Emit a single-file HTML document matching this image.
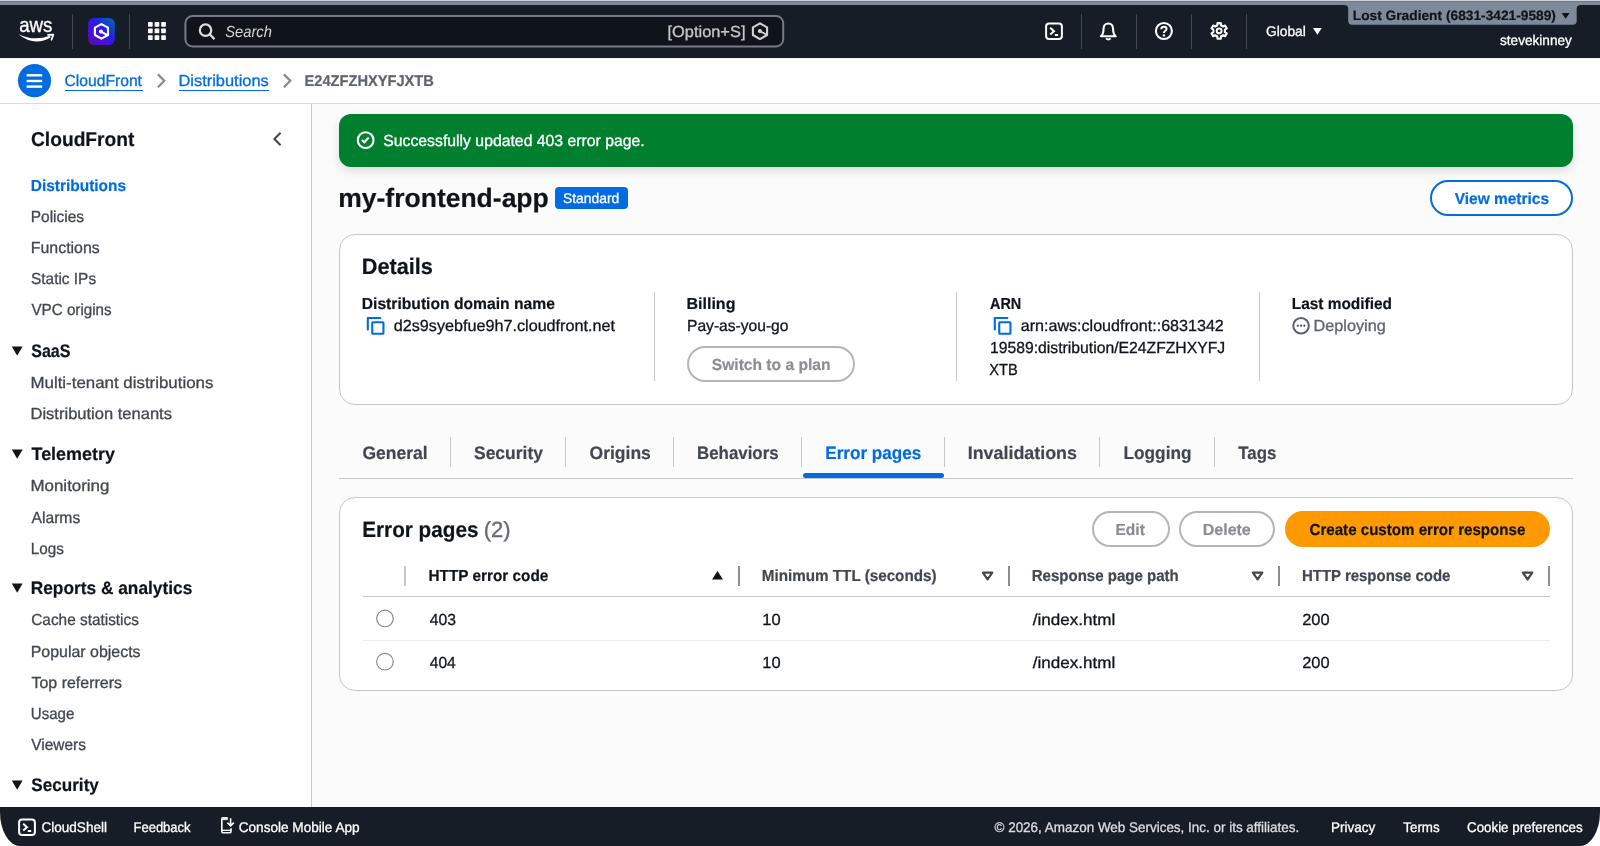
<!DOCTYPE html>
<html lang="en"><head><meta charset="utf-8"><title>CloudFront - E24ZFZHXYFJXTB</title>
<style>
*{box-sizing:border-box;margin:0;padding:0}
html,body{width:1600px;height:846px;overflow:hidden;background:#fff}
body{position:relative;font-family:"Liberation Sans",Arial,sans-serif;font-size:14px;color:#0f141a}
.a{position:absolute}
.t{position:absolute;line-height:20px;white-space:nowrap;transform-origin:0 0;text-rendering:geometricPrecision}
.vsep{position:absolute;width:1px;background:#424650}
.card{position:absolute;left:339px;width:1234px;border:1px solid #c6c6cd;border-radius:16px;background:#fff}
.btn{position:absolute;border-radius:20px;border:2px solid #b4b4bb;background:#fff}
.cdiv{position:absolute;width:1px;background:#c6c6cd}
.hdiv{position:absolute;width:2px;background:#b4b4bb}
.radio{position:absolute;width:17px;height:17px;border-radius:50%;border:1px solid #8c8c94;background:#fff}
svg{position:absolute;overflow:visible}
.tl{position:absolute;left:0;top:0;width:1600px;height:846px;will-change:transform}
</style></head><body>

<!-- main background -->
<div class="a" style="left:312px;top:104px;width:1288px;height:703px;background:#fbfbfc"></div>

<!-- top navigation -->
<div class="a" style="left:0;top:0;width:1600px;height:58px;background:#161d26"></div>
<div class="a" style="left:0;top:0;width:1600px;height:5px;background:linear-gradient(#cfd2db 0,#cfd2db 1px,#707a8a 1px,#707a8a 2px,#7e8999 2px,#7e8999 5px)"></div>
<!-- account tab -->
<svg style="left:1340px;top:4px" width="245" height="24" viewBox="0 0 245 24"><path d="M3.6 0 H241.4 V0.9 C238.6 0.9 236.7 2 236.7 4.2 V16.8 Q236.7 20.8 232.7 20.8 H12.2 Q8.2 20.8 8.2 16.8 V4.2 C8.2 2 6.4 0.9 3.6 0.9 Z" fill="#7e8999"/><path d="M221.7 9.1 h7.9 l-3.95 5.7z" fill="#0f141a"/></svg>

<!-- aws logo -->
<svg style="left:18px;top:19px;will-change:transform" width="37" height="24" viewBox="0 0 37 24"><text x="1.2" y="12.7" font-family="Liberation Sans, Arial, sans-serif" font-size="21" fill="#fff" stroke="#fff" stroke-width="0.35" textLength="33.2" lengthAdjust="spacingAndGlyphs">aws</text><path d="M0.4 15.2 Q16 22.6 31.8 16.8 L32.7 18.6 Q16 27.8 0.4 15.2 Z" fill="#fff"/><path d="M30 15.9 L35.4 15.6 L33.5 20.8" fill="none" stroke="#fff" stroke-width="1.7" stroke-linecap="round" stroke-linejoin="round"/></svg>
<div class="vsep" style="left:72px;top:13.5px;height:35px"></div>
<!-- Q icon -->
<svg style="left:87.8px;top:17.8px" width="27" height="27" viewBox="0 0 27 27"><defs><linearGradient id="qg" x1="0.05" y1="0.95" x2="0.95" y2="0.05"><stop offset="0" stop-color="#5a0aa8"/><stop offset="0.3" stop-color="#4a10d4"/><stop offset="0.58" stop-color="#2a1ce6"/><stop offset="0.8" stop-color="#0c48c8"/><stop offset="1" stop-color="#0868b4"/></linearGradient></defs><rect width="26.8" height="26.9" rx="5.8" fill="url(#qg)"/><path d="M13.45 6.1 L20 9.7 V17 L13.45 20.7 L6.9 17 V9.7 Z" fill="none" stroke="#fff" stroke-width="2.1" stroke-linejoin="round"/><circle cx="12.9" cy="13.4" r="2" fill="#fff"/><path d="M13.4 13.8 L19.4 17.2" stroke="#fff" stroke-width="2"/></svg>
<div class="vsep" style="left:129px;top:13.5px;height:35px"></div>
<!-- grid icon -->
<svg style="left:147.8px;top:22.2px" width="18" height="18" viewBox="0 0 18 18" fill="#fff"><rect x="0" y="0" width="4.7" height="4.7" rx="0.7"/><rect x="6.6" y="0" width="4.7" height="4.7" rx="0.7"/><rect x="13.2" y="0" width="4.7" height="4.7" rx="0.7"/><rect x="0" y="6.6" width="4.7" height="4.7" rx="0.7"/><rect x="6.6" y="6.6" width="4.7" height="4.7" rx="0.7"/><rect x="13.2" y="6.6" width="4.7" height="4.7" rx="0.7"/><rect x="0" y="13.2" width="4.7" height="4.7" rx="0.7"/><rect x="6.6" y="13.2" width="4.7" height="4.7" rx="0.7"/><rect x="13.2" y="13.2" width="4.7" height="4.7" rx="0.7"/></svg>
<!-- search -->
<svg style="left:0;top:0" width="800" height="58" viewBox="0 0 800 58"><rect x="185.4" y="16" width="597.8" height="30.5" rx="7.2" fill="#0f141a" stroke="#767a87" stroke-width="2"/></svg>
<svg style="left:198px;top:22px" width="19" height="19" viewBox="0 0 19 19"><circle cx="7.55" cy="8.15" r="5.7" fill="none" stroke="#dedee3" stroke-width="2.2"/><path d="M11.7 12.3 L16.5 17.1" stroke="#dedee3" stroke-width="2.2" stroke-linecap="butt"/></svg>
<svg style="left:751px;top:22px" width="18" height="19" viewBox="0 0 18 19"><path d="M9 1.4 L16.1 5.3 V13 L9 17.1 L1.9 13 V5.3 Z" fill="none" stroke="#d1d1d8" stroke-width="2.1" stroke-linejoin="round"/><circle cx="8.9" cy="9.1" r="2.1" fill="#d1d1d8"/><path d="M9.4 9.5 L15.3 12.4" stroke="#d1d1d8" stroke-width="1.9"/></svg>

<!-- right nav icons -->
<svg style="left:1045px;top:22px" width="19" height="19" viewBox="0 0 19 19"><rect x="1.1" y="1.4" width="15.8" height="15.6" rx="3" fill="none" stroke="#fff" stroke-width="2"/><path d="M5.2 5.8 L9 9.2 L5.2 12.6" fill="none" stroke="#fff" stroke-width="2" stroke-linejoin="miter"/><path d="M9.8 13 H13.2" stroke="#fff" stroke-width="2"/></svg>
<div class="vsep" style="left:1081px;top:13.5px;height:35px"></div>
<svg style="left:1099px;top:22px" width="19" height="19" viewBox="0 0 19 19"><path d="M1.9 14.3 C4.5 12.4 4.4 10.4 4.5 7 C4.6 3.6 6.6 1.5 9.3 1.5 C12 1.5 14 3.6 14.1 7 C14.2 10.4 14.1 12.4 16.7 14.3 Z" fill="none" stroke="#fff" stroke-width="2.1" stroke-linejoin="round"/><path d="M7 16.4 Q9.3 18.7 11.6 16.4" fill="none" stroke="#fff" stroke-width="1.9"/></svg>
<div class="vsep" style="left:1136px;top:13.5px;height:35px"></div>
<svg style="left:1154px;top:22px" width="19" height="19" viewBox="0 0 19 19"><circle cx="9.9" cy="9" r="8" fill="none" stroke="#fff" stroke-width="2.1"/><path d="M7.2 7.3 C7.2 5.5 8.4 4.7 9.9 4.7 C11.4 4.7 12.6 5.6 12.6 7 C12.6 8.9 9.9 8.8 9.9 11" fill="none" stroke="#fff" stroke-width="1.9"/><circle cx="9.9" cy="13.4" r="1.2" fill="#fff"/></svg>
<div class="vsep" style="left:1191px;top:13.5px;height:35px"></div>
<svg style="left:1210px;top:22px" width="19" height="19" viewBox="0 0 19 19"><path d="M7.35 3.28 L7.48 1.08 L10.82 1.08 L10.95 3.28 L13.12 4.53 L15.09 3.54 L16.76 6.43 L14.92 7.65 L14.92 10.15 L16.76 11.37 L15.09 14.26 L13.12 13.27 L10.95 14.52 L10.82 16.72 L7.48 16.72 L7.35 14.52 L5.18 13.27 L3.21 14.26 L1.54 11.37 L3.38 10.15 L3.38 7.65 L1.54 6.43 L3.21 3.54 L5.18 4.53 Z" fill="none" stroke="#fff" stroke-width="2.1" stroke-linejoin="round"/><circle cx="9.15" cy="8.9" r="2.4" fill="none" stroke="#fff" stroke-width="2"/></svg>
<div class="vsep" style="left:1246px;top:13.5px;height:35px"></div>
<svg style="left:1313px;top:28px" width="9" height="7" viewBox="0 0 9 7"><path d="M0 0 H8.8 L4.4 6.8 Z" fill="#fff"/></svg>

<!-- breadcrumb bar -->
<div class="a" style="left:0;top:103px;width:1600px;height:1px;background:#dadae0"></div>
<div class="a" style="left:0;top:58px;width:1600px;height:1px;background:#f2f2f4"></div>
<svg style="left:0;top:58px" width="60" height="46" viewBox="0 0 60 46"><circle cx="34.5" cy="22.6" r="16.6" fill="#006ce0"/></svg>
<svg style="left:18px;top:64px" width="34" height="34" viewBox="0 0 34 34" fill="#fff"><rect x="8.6" y="10.1" width="15.6" height="2.4"/><rect x="8.6" y="15.8" width="15.6" height="2.4"/><rect x="8.6" y="21.4" width="15.6" height="2.4"/></svg>
<svg style="left:156px;top:73px" width="11" height="15" viewBox="0 0 11 15"><path d="M1.9 1.4 L8.3 7.8 L1.9 14.2" fill="none" stroke="#858894" stroke-width="2.2"/></svg>
<svg style="left:281.5px;top:73px" width="11" height="15" viewBox="0 0 11 15"><path d="M1.9 1.4 L8.3 7.8 L1.9 14.2" fill="none" stroke="#858894" stroke-width="2.2"/></svg>
<div class="a" style="left:65px;top:90px;width:78px;height:1px;background:#006ce0"></div>
<div class="a" style="left:179px;top:90px;width:90px;height:1px;background:#006ce0"></div>

<!-- sidebar -->
<div class="a" style="left:311px;top:104px;width:1px;height:703px;background:#c6c6cd"></div>
<svg style="left:271px;top:131px" width="12" height="16" viewBox="0 0 12 16"><path d="M9.6 1.8 L3.4 8 L9.6 14.2" fill="none" stroke="#424650" stroke-width="2"/></svg>
<svg style="left:10.5px;top:346px" width="12" height="10" viewBox="0 0 12 10"><path d="M0.8 0.6 H11.6 L6.2 9.8 Z" fill="#0f141a"/></svg>
<svg style="left:10.5px;top:448.9px" width="12" height="10" viewBox="0 0 12 10"><path d="M0.8 0.6 H11.6 L6.2 9.8 Z" fill="#0f141a"/></svg>
<svg style="left:10.5px;top:583.3px" width="12" height="10" viewBox="0 0 12 10"><path d="M0.8 0.6 H11.6 L6.2 9.8 Z" fill="#0f141a"/></svg>
<svg style="left:10.5px;top:780px" width="12" height="10" viewBox="0 0 12 10"><path d="M0.8 0.6 H11.6 L6.2 9.8 Z" fill="#0f141a"/></svg>

<!-- flash -->
<div class="a" style="left:339px;top:114px;width:1234px;height:53px;border-radius:12px;background:#00802f;box-shadow:0 4px 10px rgba(0,7,22,.12)"></div>
<svg style="left:357px;top:131px" width="18" height="19" viewBox="0 0 18 19"><circle cx="8.65" cy="9.15" r="7.85" fill="none" stroke="#fff" stroke-width="2.1"/><path d="M4.9 8.9 L7.4 11.3 L11.7 6.5" fill="none" stroke="#fff" stroke-width="2.1"/></svg>

<!-- title row -->
<div class="a" style="left:555px;top:187px;width:73px;height:22px;border-radius:4px;background:#006ce0"></div>
<div class="btn" style="left:1430px;top:180px;width:143px;height:36px;border-color:#006ce0"></div>

<!-- details card -->
<div class="card" style="top:234px;height:171px"></div>
<div class="cdiv" style="left:654px;top:292px;height:89px"></div>
<div class="cdiv" style="left:956px;top:292px;height:89px"></div>
<div class="cdiv" style="left:1259px;top:292px;height:89px"></div>
<svg style="left:365px;top:317px" width="21" height="19" viewBox="0 0 21 19"><path d="M2.8 12.5 V0.95 H15.3" fill="none" stroke="#006ce0" stroke-width="2.1" stroke-linecap="round" stroke-linejoin="round"/><rect x="7.25" y="5.25" width="11.2" height="11.5" rx="0.6" fill="none" stroke="#006ce0" stroke-width="2.1"/></svg>
<svg style="left:992.1px;top:317px" width="21" height="19" viewBox="0 0 21 19"><path d="M2.8 12.5 V0.95 H15.3" fill="none" stroke="#006ce0" stroke-width="2.1" stroke-linecap="round" stroke-linejoin="round"/><rect x="7.25" y="5.25" width="11.2" height="11.5" rx="0.6" fill="none" stroke="#006ce0" stroke-width="2.1"/></svg>
<div class="btn" style="left:687px;top:346px;width:168px;height:36px"></div>
<svg style="left:1292px;top:317px" width="18" height="18" viewBox="0 0 18 18"><circle cx="9.05" cy="8.7" r="7.8" fill="none" stroke="#5c606b" stroke-width="2"/><circle cx="5.8" cy="8.7" r="1.1" fill="#4a4e59"/><circle cx="9.05" cy="8.7" r="1.1" fill="#4a4e59"/><circle cx="12.35" cy="8.7" r="1.1" fill="#4a4e59"/></svg>

<!-- tabs -->
<div class="a" style="left:339px;top:478px;width:1234px;height:1px;background:#c6c6cd"></div>
<div class="a" style="left:803px;top:473px;width:141px;height:5px;border-radius:3px;background:#006ce0"></div>
<div class="cdiv" style="left:450px;top:437px;height:30px"></div>
<div class="cdiv" style="left:565px;top:437px;height:30px"></div>
<div class="cdiv" style="left:673px;top:437px;height:30px"></div>
<div class="cdiv" style="left:801px;top:437px;height:30px"></div>
<div class="cdiv" style="left:944px;top:437px;height:30px"></div>
<div class="cdiv" style="left:1099px;top:437px;height:30px"></div>
<div class="cdiv" style="left:1214px;top:437px;height:30px"></div>

<!-- error pages card -->
<div class="card" style="top:497px;height:194px"></div>
<div class="btn" style="left:1092px;top:511px;width:78px;height:36px"></div>
<div class="btn" style="left:1179px;top:511px;width:96px;height:36px"></div>
<div class="btn" style="left:1284.5px;top:511px;width:265.5px;height:36px;border-color:#ff9900;background:#ff9900"></div>
<div class="hdiv" style="left:404px;top:566px;height:20px;background:#c6c6cd"></div>
<div class="hdiv" style="left:738px;top:566px;height:20px;background:#8c8c94"></div>
<div class="hdiv" style="left:1008px;top:566px;height:20px;background:#8c8c94"></div>
<div class="hdiv" style="left:1278px;top:566px;height:20px;background:#8c8c94"></div>
<div class="hdiv" style="left:1548px;top:566px;height:20px;background:#8c8c94"></div>
<div class="a" style="left:363px;top:596px;width:1187px;height:1px;background:#c6c6cd"></div>
<div class="a" style="left:363px;top:640px;width:1187px;height:1px;background:#ebebf0"></div>
<svg style="left:370px;top:600px" width="30" height="80" viewBox="0 0 30 80"><circle cx="14.95" cy="18.45" r="8.3" fill="#fff" stroke="#858891" stroke-width="1.15"/><circle cx="14.95" cy="61.7" r="8.3" fill="#fff" stroke="#858891" stroke-width="1.15"/></svg>
<svg style="left:711px;top:570px" width="13" height="11" viewBox="0 0 13 11"><path d="M6.5 1 L12 9.6 H1 Z" fill="#0f141a"/></svg>
<svg style="left:981px;top:570px" width="13" height="11" viewBox="0 0 13 11"><path d="M1.9 2.6 H11.3 L6.6 9.4 Z" fill="none" stroke="#424650" stroke-width="2.2" stroke-linejoin="round"/></svg>
<svg style="left:1251px;top:570px" width="13" height="11" viewBox="0 0 13 11"><path d="M1.9 2.6 H11.3 L6.6 9.4 Z" fill="none" stroke="#424650" stroke-width="2.2" stroke-linejoin="round"/></svg>
<svg style="left:1521px;top:570px" width="13" height="11" viewBox="0 0 13 11"><path d="M1.9 2.6 H11.3 L6.6 9.4 Z" fill="none" stroke="#424650" stroke-width="2.2" stroke-linejoin="round"/></svg>

<!-- footer -->
<div class="a" style="left:0;top:807px;width:1600px;height:39px;background:#161d26;border-radius:0 0 20px 20px / 0 0 34px 34px"></div>
<svg style="left:18px;top:818px" width="19" height="19" viewBox="0 0 19 19"><rect x="1.1" y="1.4" width="15.8" height="15.6" rx="3" fill="none" stroke="#fff" stroke-width="2"/><path d="M5.2 5.8 L9 9.2 L5.2 12.6" fill="none" stroke="#fff" stroke-width="2"/><path d="M9.8 13 H13.2" stroke="#fff" stroke-width="2"/></svg>
<svg style="left:219px;top:816px" width="16" height="19" viewBox="0 0 16 19"><path d="M8.6 1.8 H4.2 Q2.8 1.8 2.8 3.2 V15.4 Q2.8 16.8 4.2 16.8 H10.6 Q12 16.8 12 15.4 V12.2" fill="none" stroke="#fff" stroke-width="1.6"/><rect x="2.8" y="1.4" width="6" height="2.7" fill="#e6e6ea"/><path d="M2.8 14.3 H12" stroke="#fff" stroke-width="1.3"/><path d="M11.6 2.2 V9.4 M8.4 6.6 L11.6 9.8 L14.8 6.6" fill="none" stroke="#fff" stroke-width="1.6"/></svg>

<div class="tl">
<span class="t" style="left:225px;top:23px;font-size:16px;color:#d5d5dc;transform:translateX(0.25px) scaleX(0.9209);font-style:italic;">Search</span>
<span class="t" style="left:667px;top:23px;font-size:16px;color:#c6c6cd;-webkit-text-stroke:0.3px;transform:translateX(0.50px) scaleX(1.0248);">[Option+S]</span>
<span class="t" style="left:1266px;top:21px;font-size:14px;color:#fff;-webkit-text-stroke:0.3px;transform:translateX(0.00px) scaleX(0.9838);">Global</span>
<span class="t" style="left:1352px;top:6px;font-size:13.5px;color:#0f141a;font-weight:700;-webkit-text-stroke:0.2px;transform:translateX(0.75px) scaleX(1.0181);">Lost Gradient (6831-3421-9589)</span>
<span class="t" style="left:1500px;top:30px;font-size:14px;color:#fff;-webkit-text-stroke:0.3px;transform:translateX(0.00px) scaleX(0.9725);">stevekinney</span>
<a class="t" style="left:64px;top:72px;font-size:16px;color:#006ce0;-webkit-text-stroke:0.3px;transform:translateX(0.50px) scaleX(0.9786);">CloudFront</a>
<a class="t" style="left:178px;top:72px;font-size:16px;color:#006ce0;-webkit-text-stroke:0.3px;transform:translateX(0.50px) scaleX(1.0251);">Distributions</a>
<span class="t" style="left:304px;top:72px;font-size:15.5px;color:#5f6370;font-weight:700;-webkit-text-stroke:0.2px;transform:translateX(0.50px) scaleX(0.9448);">E24ZFZHXYFJXTB</span>
<h2 class="t" style="left:31px;top:130px;font-size:20px;color:#0f141a;font-weight:700;-webkit-text-stroke:0.2px;transform:translateX(0.00px) scaleX(0.9593);">CloudFront</h2>
<a class="t" style="left:30px;top:177px;font-size:16px;color:#006ce0;font-weight:700;-webkit-text-stroke:0.2px;transform:translateX(0.75px) scaleX(0.9659);">Distributions</a>
<a class="t" style="left:30px;top:208px;font-size:16px;color:#424650;-webkit-text-stroke:0.3px;transform:translateX(0.75px) scaleX(0.9651);">Policies</a>
<a class="t" style="left:30px;top:239px;font-size:16px;color:#424650;-webkit-text-stroke:0.3px;transform:translateX(0.75px) scaleX(0.9955);">Functions</a>
<a class="t" style="left:31px;top:270px;font-size:16px;color:#424650;-webkit-text-stroke:0.3px;transform:translateX(0.00px) scaleX(0.9635);">Static IPs</a>
<a class="t" style="left:31px;top:301px;font-size:16px;color:#424650;-webkit-text-stroke:0.3px;transform:translateX(0.50px) scaleX(0.9483);">VPC origins</a>
<h3 class="t" style="left:31px;top:341px;font-size:18px;color:#0f141a;font-weight:700;-webkit-text-stroke:0.2px;transform:translateX(0.25px) scaleX(0.8907);">SaaS</h3>
<a class="t" style="left:30px;top:374px;font-size:16px;color:#424650;-webkit-text-stroke:0.3px;transform:translateX(0.50px) scaleX(1.0543);">Multi-tenant distributions</a>
<a class="t" style="left:30px;top:405px;font-size:16px;color:#424650;-webkit-text-stroke:0.3px;transform:translateX(0.50px) scaleX(1.0327);">Distribution tenants</a>
<h3 class="t" style="left:31px;top:444px;font-size:18px;color:#0f141a;font-weight:700;-webkit-text-stroke:0.2px;transform:translateX(0.50px) scaleX(0.9967);">Telemetry</h3>
<a class="t" style="left:30px;top:477px;font-size:16px;color:#424650;-webkit-text-stroke:0.3px;transform:translateX(0.50px) scaleX(1.0561);">Monitoring</a>
<a class="t" style="left:31px;top:509px;font-size:16px;color:#424650;-webkit-text-stroke:0.3px;transform:translateX(0.50px) scaleX(0.9788);">Alarms</a>
<a class="t" style="left:30px;top:540px;font-size:16px;color:#424650;-webkit-text-stroke:0.3px;transform:translateX(0.75px) scaleX(0.9543);">Logs</a>
<h3 class="t" style="left:30px;top:578px;font-size:18px;color:#0f141a;font-weight:700;-webkit-text-stroke:0.2px;transform:translateX(0.75px) scaleX(0.9610);">Reports &amp; analytics</h3>
<a class="t" style="left:31px;top:611px;font-size:16px;color:#424650;-webkit-text-stroke:0.3px;transform:translateX(0.25px) scaleX(0.9606);">Cache statistics</a>
<a class="t" style="left:30px;top:643px;font-size:16px;color:#424650;-webkit-text-stroke:0.3px;transform:translateX(0.75px) scaleX(0.9955);">Popular objects</a>
<a class="t" style="left:31px;top:674px;font-size:16px;color:#424650;-webkit-text-stroke:0.3px;transform:translateX(0.50px) scaleX(0.9975);">Top referrers</a>
<a class="t" style="left:30px;top:705px;font-size:16px;color:#424650;-webkit-text-stroke:0.3px;transform:translateX(0.75px) scaleX(0.9438);">Usage</a>
<a class="t" style="left:31px;top:736px;font-size:16px;color:#424650;-webkit-text-stroke:0.3px;transform:translateX(0.25px) scaleX(0.9670);">Viewers</a>
<h3 class="t" style="left:31px;top:775px;font-size:18px;color:#0f141a;font-weight:700;-webkit-text-stroke:0.2px;transform:translateX(0.25px) scaleX(0.9519);">Security</h3>
<span class="t" style="left:383px;top:132px;font-size:16px;color:#fff;-webkit-text-stroke:0.3px;transform:translateX(0.25px) scaleX(0.9865);">Successfully updated 403 error page.</span>
<h1 class="t" style="left:338px;top:188px;font-size:26.5px;color:#0f141a;font-weight:700;-webkit-text-stroke:0.2px;transform:translateX(0.25px) scaleX(0.9999);">my-frontend-app</h1>
<span class="t" style="left:563px;top:188px;font-size:14px;color:#fff;-webkit-text-stroke:0.3px;transform:translateX(0.00px) scaleX(0.9893);">Standard</span>
<span class="t" style="left:1454px;top:190px;font-size:16px;color:#006ce0;font-weight:700;-webkit-text-stroke:0.2px;transform:translateX(0.75px) scaleX(0.9663);">View metrics</span>
<h2 class="t" style="left:361px;top:257px;font-size:22.5px;color:#0f141a;font-weight:700;-webkit-text-stroke:0.2px;transform:translateX(0.75px) scaleX(0.9634);">Details</h2>
<b class="t" style="left:361px;top:295px;font-size:16px;color:#0f141a;font-weight:700;-webkit-text-stroke:0.2px;transform:translateX(0.75px) scaleX(0.9785);">Distribution domain name</b>
<span class="t" style="left:393px;top:317px;font-size:16px;color:#0f141a;-webkit-text-stroke:0.3px;transform:translateX(0.75px) scaleX(1.0109);">d2s9syebfue9h7.cloudfront.net</span>
<b class="t" style="left:686px;top:295px;font-size:16px;color:#0f141a;font-weight:700;-webkit-text-stroke:0.2px;transform:translateX(0.50px) scaleX(1.0012);">Billing</b>
<span class="t" style="left:687px;top:317px;font-size:16px;color:#0f141a;-webkit-text-stroke:0.3px;transform:translateX(0.00px) scaleX(0.9751);">Pay-as-you-go</span>
<span class="t" style="left:711px;top:356px;font-size:16px;color:#8c8c94;font-weight:700;-webkit-text-stroke:0.2px;transform:translateX(0.75px) scaleX(0.9752);">Switch to a plan</span>
<b class="t" style="left:990px;top:295px;font-size:16px;color:#0f141a;font-weight:700;-webkit-text-stroke:0.2px;transform:translateX(0.00px) scaleX(0.9025);">ARN</b>
<span class="t" style="left:1020px;top:317px;font-size:16px;color:#0f141a;-webkit-text-stroke:0.3px;transform:translateX(0.75px) scaleX(1.0055);">arn:aws:cloudfront::6831342</span>
<span class="t" style="left:990px;top:339px;font-size:16px;color:#0f141a;-webkit-text-stroke:0.3px;transform:translateX(0.00px) scaleX(0.9831);">19589:distribution/E24ZFZHXYFJ</span>
<span class="t" style="left:989px;top:361px;font-size:16px;color:#0f141a;-webkit-text-stroke:0.3px;transform:translateX(0.25px) scaleX(0.9129);">XTB</span>
<b class="t" style="left:1291px;top:295px;font-size:16px;color:#0f141a;font-weight:700;-webkit-text-stroke:0.2px;transform:translateX(0.75px) scaleX(0.9636);">Last modified</b>
<span class="t" style="left:1313px;top:317px;font-size:16px;color:#5f636e;-webkit-text-stroke:0.3px;transform:translateX(0.50px) scaleX(1.0151);">Deploying</span>
<a class="t" style="left:362px;top:443px;font-size:18px;color:#424650;font-weight:700;-webkit-text-stroke:0.2px;transform:translateX(0.50px) scaleX(0.9719);">General</a>
<a class="t" style="left:474px;top:443px;font-size:18px;color:#424650;font-weight:700;-webkit-text-stroke:0.2px;transform:translateX(0.00px) scaleX(0.9703);">Security</a>
<a class="t" style="left:589px;top:443px;font-size:18px;color:#424650;font-weight:700;-webkit-text-stroke:0.2px;transform:translateX(0.50px) scaleX(0.9734);">Origins</a>
<a class="t" style="left:697px;top:443px;font-size:18px;color:#424650;font-weight:700;-webkit-text-stroke:0.2px;transform:translateX(0.00px) scaleX(0.9374);">Behaviors</a>
<a class="t" style="left:825px;top:443px;font-size:18px;color:#006ce0;font-weight:700;-webkit-text-stroke:0.2px;transform:translateX(0.25px) scaleX(0.9500);">Error pages</a>
<a class="t" style="left:967px;top:443px;font-size:18px;color:#424650;font-weight:700;-webkit-text-stroke:0.2px;transform:translateX(0.75px) scaleX(0.9918);">Invalidations</a>
<a class="t" style="left:1123px;top:443px;font-size:18px;color:#424650;font-weight:700;-webkit-text-stroke:0.2px;transform:translateX(0.50px) scaleX(0.9581);">Logging</a>
<a class="t" style="left:1238px;top:443px;font-size:18px;color:#424650;font-weight:700;-webkit-text-stroke:0.2px;transform:translateX(0.25px) scaleX(0.9364);">Tags</a>
<h2 class="t" style="left:362px;top:520px;font-size:22px;color:#0f141a;font-weight:700;-webkit-text-stroke:0.2px;transform:translateX(0.25px) scaleX(0.9407);">Error pages</h2>
<span class="t" style="left:483px;top:520px;font-size:22px;color:#656871;-webkit-text-stroke:0.3px;transform:translateX(0.75px) scaleX(1.0029);">(2)</span>
<span class="t" style="left:1115px;top:521px;font-size:16px;color:#8c8c94;font-weight:700;-webkit-text-stroke:0.2px;transform:translateX(0.50px) scaleX(0.9710);">Edit</span>
<span class="t" style="left:1202px;top:521px;font-size:16px;color:#8c8c94;font-weight:700;-webkit-text-stroke:0.2px;transform:translateX(0.75px) scaleX(0.9996);">Delete</span>
<span class="t" style="left:1309px;top:521px;font-size:16px;color:#0f141a;font-weight:700;-webkit-text-stroke:0.2px;transform:translateX(0.50px) scaleX(0.9445);">Create custom error response</span>
<b class="t" style="left:428px;top:567px;font-size:16px;color:#0f141a;font-weight:700;-webkit-text-stroke:0.2px;transform:translateX(0.50px) scaleX(0.9575);">HTTP error code</b>
<b class="t" style="left:761px;top:567px;font-size:16px;color:#424650;font-weight:700;-webkit-text-stroke:0.2px;transform:translateX(0.75px) scaleX(0.9514);">Minimum TTL (seconds)</b>
<b class="t" style="left:1031px;top:567px;font-size:16px;color:#424650;font-weight:700;-webkit-text-stroke:0.2px;transform:translateX(0.75px) scaleX(0.9395);">Response page path</b>
<b class="t" style="left:1302px;top:567px;font-size:16px;color:#424650;font-weight:700;-webkit-text-stroke:0.2px;transform:translateX(0.00px) scaleX(0.9344);">HTTP response code</b>
<span class="t" style="left:429px;top:611px;font-size:16px;color:#0f141a;-webkit-text-stroke:0.3px;transform:translateX(0.75px) scaleX(0.9804);">403</span>
<span class="t" style="left:762px;top:611px;font-size:16px;color:#0f141a;-webkit-text-stroke:0.3px;transform:translateX(0.25px) scaleX(1.0303);">10</span>
<span class="t" style="left:1032px;top:611px;font-size:16px;color:#0f141a;-webkit-text-stroke:0.3px;transform:translateX(0.75px) scaleX(1.0656);">/index.html</span>
<span class="t" style="left:1302px;top:611px;font-size:16px;color:#0f141a;-webkit-text-stroke:0.3px;transform:translateX(0.25px) scaleX(1.0242);">200</span>
<span class="t" style="left:429px;top:654px;font-size:16px;color:#0f141a;-webkit-text-stroke:0.3px;transform:translateX(0.75px) scaleX(0.9719);">404</span>
<span class="t" style="left:762px;top:654px;font-size:16px;color:#0f141a;-webkit-text-stroke:0.3px;transform:translateX(0.25px) scaleX(1.0303);">10</span>
<span class="t" style="left:1032px;top:654px;font-size:16px;color:#0f141a;-webkit-text-stroke:0.3px;transform:translateX(0.75px) scaleX(1.0656);">/index.html</span>
<span class="t" style="left:1302px;top:654px;font-size:16px;color:#0f141a;-webkit-text-stroke:0.3px;transform:translateX(0.25px) scaleX(1.0242);">200</span>
<a class="t" style="left:41px;top:817px;font-size:14px;color:#fff;-webkit-text-stroke:0.3px;transform:translateX(0.50px) scaleX(0.9668);">CloudShell</a>
<a class="t" style="left:133px;top:817px;font-size:14px;color:#fff;-webkit-text-stroke:0.3px;transform:translateX(0.50px) scaleX(0.9283);">Feedback</a>
<a class="t" style="left:238px;top:817px;font-size:14px;color:#fff;-webkit-text-stroke:0.3px;transform:translateX(0.75px) scaleX(0.9703);">Console Mobile App</a>
<span class="t" style="left:994px;top:817px;font-size:14px;color:#dedee3;-webkit-text-stroke:0.3px;transform:translateX(0.50px) scaleX(0.9607);">© 2026, Amazon Web Services, Inc. or its affiliates.</span>
<a class="t" style="left:1331px;top:817px;font-size:14px;color:#fff;-webkit-text-stroke:0.3px;transform:translateX(0.00px) scaleX(0.9657);">Privacy</a>
<a class="t" style="left:1403px;top:817px;font-size:14px;color:#fff;-webkit-text-stroke:0.3px;transform:translateX(0.25px) scaleX(0.9565);">Terms</a>
<a class="t" style="left:1467px;top:817px;font-size:14px;color:#fff;-webkit-text-stroke:0.3px;transform:translateX(0.00px) scaleX(0.9529);">Cookie preferences</a>
</div>
</body></html>
